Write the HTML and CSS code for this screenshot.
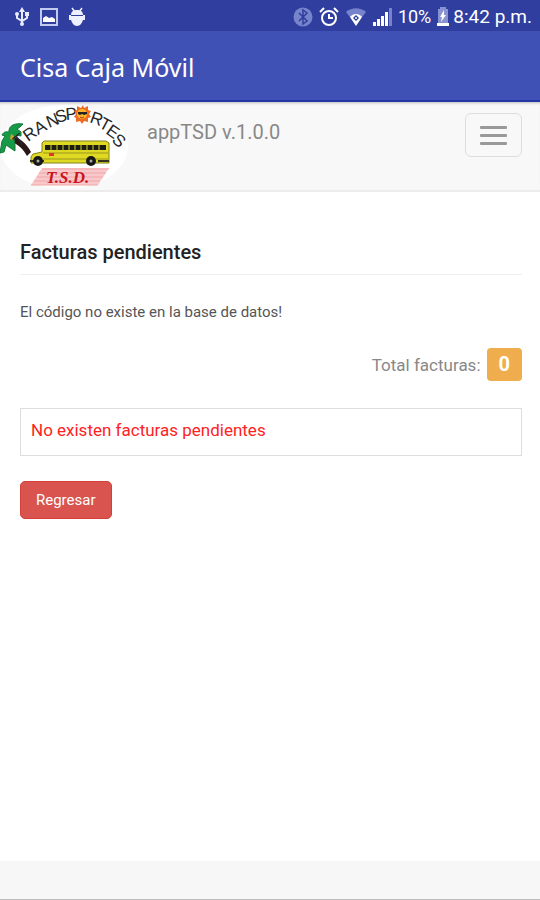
FILE: index.html
```html
<!DOCTYPE html>
<html lang="es">
<head>
	<meta charset="utf-8">
	<title>Cisa Caja Móvil</title>
	<meta name="viewport" content="width=device-width, initial-scale=1">
	<link rel="stylesheet" href="styles.css">
</head>
<body>
	<div class="status">
		<div class="status-left">
			<svg width="16" height="20" viewBox="0 0 16 20" fill="none" stroke="#e8ebff" stroke-width="2">
				<path d="M8 3v14M3 7v4l5 3 5-3V7"/>
				<path d="M8 0l3 5H5z" fill="#e8ebff" stroke="none"/>
				<circle cx="8" cy="17" r="2" fill="#e8ebff" stroke="none"/>
				<circle cx="3" cy="7" r="2" fill="#e8ebff" stroke="none"/>
				<path d="M11 5h4v4h-4z" fill="#e8ebff" stroke="none"/>
			</svg>
			<svg width="18" height="18" viewBox="0 0 18 18">
				<rect x="1" y="1" width="16" height="16" fill="none" stroke="#c3caf0" stroke-width="2"/>
				<path d="M3 14v-4l3-2 3 2 3-1 3 2v3z" fill="#fff"/>
			</svg>
			<svg width="18" height="18" viewBox="0 0 18 18" fill="#eef0ff">
				<path d="M3 7C3 3 6 2 9 2s6 1 6 5z"/>
				<path d="M4 0l3 4M14 0l-3 4" stroke="#eef0ff" stroke-width="1.500"/>
				<path d="M1 7h2v1h12V7h2v5h-2c-1 3-3 6-6 6s-5-3-6-6H1z"/>
			</svg>
		</div>
		<div class="status-right">
			<svg width="20" height="20" viewBox="0 0 20 20">
				<circle cx="10" cy="10" r="9.500" fill="#7783cb"/>
				<path d="M6 6l8 8-4 3V3l4 3-8 8" fill="none" stroke="#303f9f" stroke-width="1.500"/>
			</svg>
			<svg width="20" height="20" viewBox="0 0 20 20" fill="none" stroke="#fff" stroke-width="2">
				<circle cx="10" cy="11" r="7"/>
				<path d="M10 7v4h4M1 5l4-4M19 5l-4-4"/>
			</svg>
			<svg width="22" height="18" viewBox="0 0 22 18">
				<path d="M1 4C7-1 15-1 21 4L11 17z" fill="#7783cb"/>
				<path d="M5 9c3-4 9-4 12 0l-6 9z" fill="#fff"/>
				<path d="M11 7l3 3-3 3-3-3z" fill="#303f9f"/>
				<circle cx="11" cy="10" r="1" fill="#fff"/>
			</svg>
			<svg width="19" height="18" viewBox="0 0 19 18" fill="#fff">
				<path d="M0 14h3v4H0zM4 11h3v7H4zM8 8h3v10H8zM12 4h3v14h-3z"/>
				<path d="M16 0h3v18h-3z" fill="#7783cb"/>
			</svg>
			<span>10%</span>
			<svg class="battery" width="12" height="19" viewBox="0 0 12 19">
				<path d="M3 0h6v2h2v14H1V2h2z" fill="#8993d0"/>
				<path d="M0 16h12v3H0zM7 3L3 10h2l-1 5 5-7H7z" fill="#fff"/>
			</svg>
			<span class="clock">8:42 p.m.</span>
		</div>
	</div>

	<header class="appbar">
		<h1>Cisa Caja Móvil</h1>
	</header>

	<nav class="navbar">
		<a class="logo" href="#" aria-label="Transportes TSD">
			<svg width="128" height="88" viewBox="0 0 128 88">
				<ellipse cx="64" cy="45" rx="64" ry="42" fill="#fff"/>
				<!-- palm tree -->
				<path d="M13 35c7 1 13 6 18 15l-4 4c-4-7-8-11-15-14z" fill="#2b1717"/>
				<path d="M9 28c1-5 6-7 14-6l-3 3-3 2 4 3v4l-6-1-1 4 1 6v6l-6-4-3-2-2 7-4 1 1-6 1-6 3-5-3-1c1-2 3-4 7-3z" fill="#179a48" stroke="#0d7a38"/>
				<path d="M11 32l3 2-1 4-3-1z" fill="#cba51f"/>
				<text class="arc" x="19 28 38 49 57 66 89 98 105 111" y="46 40 33 26 21 18 20 25 31 39" rotate="-40 -35 -30 -22 -15 -5 20 28 35 42">TRANSPRTES</text>
				<!-- sun -->
				<path d="M83 3l1 3 4-2v4l3 1-2 3 2 3-3 1v4l-4-1-2 3-2-3-4 1v-4l-2-1 2-3-2-3 3-1V4l4 2z" fill="#ed6b24"/>
				<circle cx="82" cy="12" r="5" fill="#ffb52b"/>
				<path d="M78 10h9v2l-3 1-2-1-2 1-2-1z" fill="#222"/>
				<path d="M80 15q2 2 4 0" fill="none" stroke="#a43c12"/>
				<!-- bus -->
				<path d="M42 41l2-2h62l3 2v20H31v-6l2-3 9-2z" fill="#e0d923" stroke="#84801b"/>
				<path d="M45 43h61v5H45z" fill="#1d1d12"/>
				<path d="M51 42v7M57 42v7M63 42v7M69 42v7M75 42v7M81 42v7M87 42v7M93 42v7M99 42v7" stroke="#d4ce27"/>
				<path d="M43 51h65M43 57h65" stroke="#9b951c"/>
				<path d="M30 59h14M98 59h11" stroke="#35331a" stroke-width="2"/>
				<path d="M49 51h5v3h-5z" fill="#e4352b"/>
				<circle cx="38" cy="59" r="5" fill="#171717"/>
				<circle cx="91" cy="59" r="5" fill="#171717"/>
				<circle cx="38" cy="59" r="1.500" fill="#aaa"/>
				<circle cx="91" cy="59" r="1.500" fill="#aaa"/>
				<!-- red plate -->
				<path d="M42 66h67L98 83H31z" fill="#f8c9cb"/>
				<path d="M42 67h67M39 71h67M37 75h66M34 79h66M31 83h67" stroke="#f2a5a8"/>
				<text class="tsd" x="46" y="81">T.S.D.</text>
			</svg>
		</a>
		<span class="brand">appTSD v.1.0.0</span>
		<button class="toggle" type="button" aria-label="Menú">
			<span></span>
			<span></span>
			<span></span>
		</button>
	</nav>

	<main>
		<h2>Facturas pendientes</h2>
		<p class="message">El código no existe en la base de datos!</p>
		<div class="total">Total facturas: <span class="label">0</span></div>
		<div class="empty">No existen facturas pendientes</div>
		<button class="back" type="button">Regresar</button>
	</main>

	<footer></footer>
</body>
</html>
```
FILE: styles.css
```css
*{ margin:0; padding:0; box-sizing:border-box; }
body{ min-height:100vh; display:flex; flex-direction:column; background:#fff; color:#333; font-family:Roboto, "Liberation Sans", sans-serif; }
svg{ display:block; flex:none; overflow:visible; }

.status{ height:31px; padding:2px 8px 0 14px; display:flex; justify-content:space-between; align-items:center; background:#303f9f; color:#fff; font-size:18px; line-height:24px; white-space:nowrap; }
.status-left{ display:flex; align-items:center; gap:10px; }
.status-right{ display:flex; align-items:center; gap:6px; }
.status .battery{ margin-right:-2px; }
.status .clock{ font-size:19px; }

.appbar{ height:71px; padding:2px 20px 0; display:flex; align-items:center; background:#3f51b5; border-bottom:2px solid #2437a5; color:#fff; }
.appbar h1{ font-family:"Noto Sans", sans-serif; font-size:25px; font-weight:400; line-height:32px; }

.navbar{ height:90px; padding-right:18px; display:flex; align-items:flex-start; background:#f8f8f8; border-bottom:2px solid #ececec; box-shadow:inset 0 3px 3px -2px #bbb; }
.logo text{ fill:#262626; }
.logo .arc{ font-family:"Liberation Sans", sans-serif; font-size:17px; }
.logo .tsd{ font-family:"Liberation Serif", serif; font-size:17px; font-weight:700; font-style:italic; fill:#c9161d; }
.brand{ flex:1; padding:18px 0 0 19px; font-size:20px; line-height:24px; color:#888; }
.toggle{ width:57px; height:44px; margin-top:11px; padding:0 14px; display:flex; flex-direction:column; justify-content:center; gap:5px; background:transparent; border:1px solid #ddd; border-radius:6px; }
.toggle span{ display:block; height:3px; border-radius:1px; background:#999; }

main{ flex:1; padding:48px 18px 24px 20px; }
main h2{ padding-bottom:10px; border-bottom:1px solid #eee; font-size:20px; font-weight:500; line-height:24px; color:#222; }
.message{ margin-top:25px; font-size:15px; line-height:24px; color:#555; }
.total{ margin-top:24px; display:flex; justify-content:flex-end; align-items:center; gap:6px; font-size:17px; line-height:24px; color:#888; }
.label{ height:33px; padding:0 12px; border-radius:4px; background:#f0ad4e; color:#fff; font-size:20px; font-weight:700; line-height:32px; }
.empty{ height:48px; margin-top:27px; padding:9px 10px; border:1px solid #ddd; font-size:17px; line-height:24px; color:#f22; }
.back{ height:38px; margin-top:25px; padding:0 15px; border:1px solid #d43f3a; border-radius:5px; background:#d9534f; color:#fff; font-family:inherit; font-size:15px; line-height:24px; }

footer{ height:39px; background:#f7f7f7; border-bottom:1px solid #bbb; }
```
